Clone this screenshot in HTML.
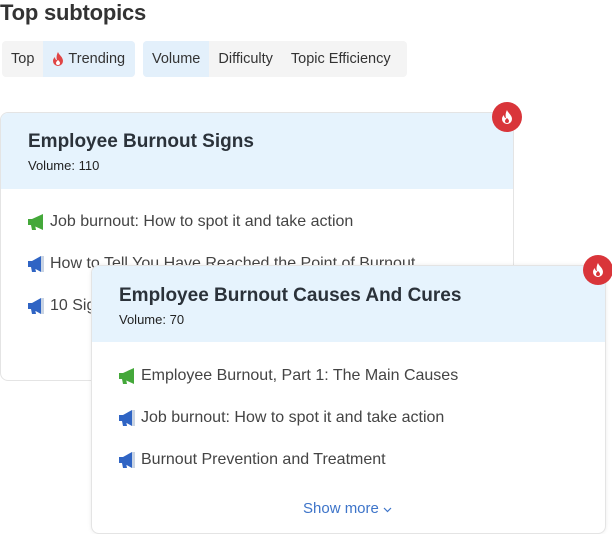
<!DOCTYPE html>
<html><head><meta charset="utf-8"><style>
*{box-sizing:border-box;margin:0;padding:0}
body{width:612px;height:534px;background:#fff;font-family:"Liberation Sans","DejaVu Sans",sans-serif;color:#333;position:relative;overflow:hidden}
h1{position:absolute;left:0;top:0;font-size:22px;font-weight:bold;color:#333;letter-spacing:-0.2px}
.grp{position:absolute;top:41px;height:36px;background:#f4f4f4;border-radius:4px;display:flex;overflow:hidden}
.grp span{display:flex;align-items:center;padding:0 9px;font-size:14.5px;color:#333}
.grp span.on{background:#e3f0fb}
.card{position:absolute;background:#fff;border:1px solid #e4e4e4;border-radius:8px;overflow:hidden}
.hd{background:#e6f3fd;height:76px;padding:18px 0 0 27px}
.hd b{display:block;font-size:19px;color:#2b323a}
.hd small{display:block;font-size:13px;margin-top:5px;color:#222}
.it{position:absolute;left:27px;font-size:16px;color:#444;display:flex;align-items:center;gap:5px;white-space:nowrap}
.fire{position:absolute;width:30px;height:30px;border-radius:50%;background:#d9353a;display:flex;align-items:center;justify-content:center}
</style></head><body>
<h1>Top subtopics</h1>
<div class="grp" style="left:2px;width:133px"><span>Top</span><span class="on" style="flex:1"><svg width="12" height="14" viewBox="0 0 12 14"><path d="M6 0C7 3 11 5 11 9a5 5 0 0 1-10 0c0-2 1-3 2-4 0 2 1 3 2 3C4 5 5 2 6 0z" fill="#e04545"/><path d="M6 8c1 1 2 2 2 3a2 2 0 0 1-4 0c0-1 1-2 2-3z" fill="#fff"/></svg>&nbsp;Trending</span></div>
<div class="grp" style="left:143px;width:264px"><span class="on">Volume</span><span>Difficulty</span><span>Topic Efficiency</span></div>

<div class="card" style="left:0;top:112px;width:514px;height:269px">
<div class="hd"><b>Employee Burnout Signs</b><small>Volume: 110</small></div>
<div class="it" style="top:100px"><svg width="17" height="17" viewBox="0 0 17 17"><path d="M0 5h4l11-5v16L4 11H0z M3 11h4l1 5H4z" fill="#44a83a"/></svg>Job burnout: How to spot it and take action</div>
<div class="it" style="top:142px"><svg width="17" height="17" viewBox="0 0 17 17"><path d="M0 5h4l9-5v16L4 11H0z M3 11h4l1 5H4z" fill="#2f64c4"/><path d="M13 0h3v16h-3z" fill="#c9d4e4"/></svg>How to Tell You Have Reached the Point of Burnout</div>
<div class="it" style="top:184px"><svg width="17" height="17" viewBox="0 0 17 17"><path d="M0 5h4l9-5v16L4 11H0z M3 11h4l1 5H4z" fill="#2f64c4"/><path d="M13 0h3v16h-3z" fill="#c9d4e4"/></svg>10 Signs</div>
</div>
<div class="fire" style="left:492px;top:102px"><svg width="12" height="16" viewBox="0 0 12 14"><path d="M6 0C7 3 11 5 11 9a5 5 0 0 1-10 0c0-2 1-3 2-4 0 2 1 3 2 3C4 5 5 2 6 0z" fill="#fff"/><path d="M6 8c1 1 2 2 2 3a2 2 0 0 1-4 0c0-1 1-2 2-3z" fill="#d9353a"/></svg></div>

<div class="card" style="left:91px;top:265px;width:515px;height:269px;box-shadow:0 0 4px rgba(0,0,0,.08)">
<div class="hd" style="padding-top:19px"><b>Employee Burnout Causes And Cures</b><small>Volume: 70</small></div>
<div class="it" style="top:101px"><svg width="17" height="17" viewBox="0 0 17 17"><path d="M0 5h4l11-5v16L4 11H0z M3 11h4l1 5H4z" fill="#44a83a"/></svg>Employee Burnout, Part 1: The Main Causes</div>
<div class="it" style="top:143px"><svg width="17" height="17" viewBox="0 0 17 17"><path d="M0 5h4l9-5v16L4 11H0z M3 11h4l1 5H4z" fill="#2f64c4"/><path d="M13 0h3v16h-3z" fill="#c9d4e4"/></svg>Job burnout: How to spot it and take action</div>
<div class="it" style="top:185px"><svg width="17" height="17" viewBox="0 0 17 17"><path d="M0 5h4l9-5v16L4 11H0z M3 11h4l1 5H4z" fill="#2f64c4"/><path d="M13 0h3v16h-3z" fill="#c9d4e4"/></svg>Burnout Prevention and Treatment</div>
<div style="position:absolute;left:211px;top:234px;font-size:15px;color:#3d74c9">Show more <svg width="9" height="6" viewBox="0 0 9 6"><path d="M1 1l3.5 3.5L8 1" stroke="#3d74c9" fill="none" stroke-width="1.2"/></svg></div>
</div>
<div class="fire" style="left:583px;top:255px"><svg width="12" height="16" viewBox="0 0 12 14"><path d="M6 0C7 3 11 5 11 9a5 5 0 0 1-10 0c0-2 1-3 2-4 0 2 1 3 2 3C4 5 5 2 6 0z" fill="#fff"/><path d="M6 8c1 1 2 2 2 3a2 2 0 0 1-4 0c0-1 1-2 2-3z" fill="#d9353a"/></svg></div>
</body></html>
